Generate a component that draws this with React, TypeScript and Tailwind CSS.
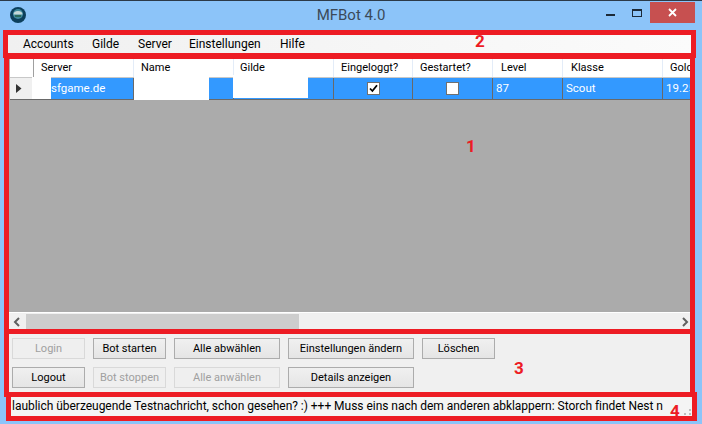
import React from 'react';

const columns = [
  { title: 'Server', width: 'w-[100px]', pad: 'pl-[7px]' },
  { title: 'Name', width: 'w-[100px]', pad: 'pl-[7px]' },
  { title: 'Gilde', width: 'w-[100px]', pad: 'pl-[6px]' },
  { title: 'Eingeloggt?', width: 'w-[79px]', pad: 'pl-[7px]' },
  { title: 'Gestartet?', width: 'w-[80px]', pad: 'pl-[7px]' },
  { title: 'Level', width: 'w-[70px]', pad: 'pl-[8px]' },
  { title: 'Klasse', width: 'w-[100px]', pad: 'pl-[8px]' },
  { title: 'Gold', width: 'w-[60px]', pad: 'pl-[7px]' },
];

const menuItems = [
  { label: 'Accounts', width: 'w-[69px]' },
  { label: 'Gilde', width: 'w-[46px]' },
  { label: 'Server', width: 'w-[51px]' },
  { label: 'Einstellungen', width: 'w-[91px]' },
  { label: 'Hilfe', width: 'w-[40px]' },
];

function Btn({ label, width, disabled }: { label: string; width: string; disabled?: boolean }) {
  return (
    <div
      className={`${width} h-[21px] pt-[1px] flex items-center justify-center border text-[11px] ${
        disabled
          ? 'border-[#d9d9d9] bg-[#efefef] text-[#a0a0a0]'
          : 'border-[#acacac] bg-gradient-to-b from-[#f0f0f0] to-[#e5e5e5] text-black'
      }`}
    >
      {label}
    </div>
  );
}

function Check({ checked }: { checked?: boolean }) {
  return (
    <div className="w-[13px] h-[13px] bg-white border border-[#707070] flex items-center justify-center">
      {checked && (
        <svg width="9" height="9" viewBox="0 0 9 9">
          <path d="M1 4.5 L3.4 7 L8 1.2" fill="none" stroke="#000" strokeWidth="1.8" />
        </svg>
      )}
    </div>
  );
}

function Annotation({ className }: { className: string }) {
  return <div className={`absolute border-[5px] border-[#ed1c24] pointer-events-none ${className}`} />;
}

function Num({ className, children }: { className: string; children: React.ReactNode }) {
  return <div className={`absolute text-[17px] font-bold leading-none text-[#ed1c24] ${className}`}>{children}</div>;
}

export default function App() {
  return (
    <div
      className="relative w-[702px] h-[424px] overflow-hidden bg-[#8cc4f9] flex flex-col border-t border-[#2c3a48]"
      style={{ fontFamily: 'Roboto, "Noto Sans", sans-serif' }}
    >
      {/* title bar */}
      <div className="relative h-[29px] shrink-0 flex items-center justify-center">
        <svg className="absolute left-[10px] top-[6px]" width="16" height="16" viewBox="0 0 16 16">
          <circle cx="8" cy="8" r="8" fill="#0c3f5c" />
          <circle cx="8" cy="7" r="5" fill="#3f8a9e" />
          <path d="M3.5 7.5 A4.5 3.5 0 0 1 12.5 7.5 Z" fill="#c5d8d8" />
          <path d="M5 8 h6 v2 h-6 Z" fill="#2a6a5c" />
        </svg>
        <span className="text-[15px] text-[#3b4a5a]">MFBot 4.0</span>
        <div className="absolute left-[606px] top-[13px] w-[9px] h-[2px] bg-[#1c2a38]" />
        <div className="absolute left-[632px] top-[8px] w-[10px] h-[8px] border border-t-2 border-[#1c2a38]" />
        <div className="absolute left-[650px] top-[1px] w-[45px] h-[21px] bg-[#c75050] flex items-center justify-center">
          <svg width="9" height="9" viewBox="0 0 9 9">
            <path d="M1 1 L8 8 M8 1 L1 8" stroke="#fff" strokeWidth="1.8" />
          </svg>
        </div>
      </div>

      {/* content */}
      <div className="ml-[8px] w-[683px] flex flex-col">
        <div className="h-[28px] flex items-center pl-[15px] bg-gradient-to-r from-[#f0f0f0] to-[#fbfbfb]">
          {menuItems.map((m) => (
            <div key={m.label} className={`${m.width} text-[12px] text-black`}>
              {m.label}
            </div>
          ))}
        </div>

        {/* grid */}
        <div className="flex flex-col bg-[#ababab] h-[254px] overflow-hidden pl-[2px]">
          <div className="h-[20px] flex bg-white border-b border-[#c8c8c8] shrink-0">
            <div className="w-[24px] shrink-0 border-r border-[#a0a0a0]" />
            {columns.map((c) => (
              <div
                key={c.title}
                className={`${c.width} ${c.pad} pt-[2px] shrink-0 border-r border-[#e3ecf8] text-[11px] text-black flex items-center`}
              >
                {c.title}
              </div>
            ))}
          </div>
          <div className="h-[22px] flex shrink-0 bg-[#3399ff] border-b border-[#696969] text-[11.5px] text-white">
            <div className="w-[24px] shrink-0 bg-[#f0f0f0] border-r border-[#a0a0a0] flex items-center pl-[6px]">
              <svg width="6" height="9" viewBox="0 0 6 9">
                <path d="M0 0 L5.5 4.5 L0 9 Z" fill="#333" />
              </svg>
            </div>
            <div className="w-[100px] shrink-0 border-r border-[#696969] pl-[17px] pt-[1px] flex items-center">sfgame.de</div>
            <div className="w-[100px] shrink-0 border-r border-[#696969]" />
            <div className="w-[100px] shrink-0 border-r border-[#696969]" />
            <div className="w-[79px] shrink-0 border-r border-[#696969] flex items-center justify-center">
              <Check checked />
            </div>
            <div className="w-[80px] shrink-0 border-r border-[#696969] flex items-center justify-center">
              <Check />
            </div>
            <div className="w-[70px] shrink-0 border-r border-[#696969] pl-[3px] pt-[1px] flex items-center">87</div>
            <div className="w-[100px] shrink-0 border-r border-[#696969] pl-[3px] pt-[1px] flex items-center">Scout</div>
            <div className="w-[60px] shrink-0 pl-[3px] pt-[1px] flex items-center">19.25</div>
          </div>
        </div>

        {/* scrollbar */}
        <div className="h-[18px] flex items-center bg-[#f0f0f0] border-t border-white pl-[5px] pr-[2px]">
          <svg width="8" height="10" viewBox="0 0 8 10">
            <path d="M6 1 L2 5 L6 9" fill="none" stroke="#606060" strokeWidth="2" />
          </svg>
          <div className="ml-[5px] w-[273px] h-[15px] bg-[#cdcdcd]" />
          <div className="flex-1" />
          <svg width="8" height="10" viewBox="0 0 8 10">
            <path d="M2 1 L6 5 L2 9" fill="none" stroke="#606060" strokeWidth="2" />
          </svg>
        </div>

        {/* buttons */}
        <div className="h-[66px] bg-[#f0f0f0] flex flex-col gap-[8px] pt-[8px] pl-[4px]">
          <div className="flex gap-[8px]">
            <Btn label="Login" width="w-[73px]" disabled />
            <Btn label="Bot starten" width="w-[73px]" />
            <Btn label="Alle abwählen" width="w-[106px]" />
            <Btn label="Einstellungen ändern" width="w-[126px]" />
            <Btn label="Löschen" width="w-[73px]" />
          </div>
          <div className="flex gap-[8px]">
            <Btn label="Logout" width="w-[73px]" />
            <Btn label="Bot stoppen" width="w-[73px]" disabled />
            <Btn label="Alle anwählen" width="w-[106px]" disabled />
            <Btn label="Details anzeigen" width="w-[126px]" />
          </div>
        </div>
      </div>

      {/* status strip */}
      <div className="relative ml-[11px] w-[681px] h-[20px] bg-[#f4f4f4] flex items-center pl-[1px] overflow-hidden">
        <span className="text-[12px] tracking-[-0.03px] text-black whitespace-nowrap">
          laublich überzeugende Testnachricht, schon gesehen? :) +++ Muss eins nach dem anderen abklappern: Storch findet Nest n
        </span>
        <div className="absolute right-[1px] bottom-[1px] w-[11px] h-[9px] grid grid-cols-3 gap-[2px] content-end justify-end">
          <span />
          <span />
          <span className="w-[2px] h-[2px] bg-[#bdbdbd]" />
          <span />
          <span className="w-[2px] h-[2px] bg-[#bdbdbd]" />
          <span className="w-[2px] h-[2px] bg-[#bdbdbd]" />
        </div>
      </div>

      {/* redaction patches */}
      <div className="absolute left-[32px] top-[76px] w-[19px] h-[22px] bg-white" />
      <div className="absolute left-[134px] top-[74px] w-[75px] h-[25px] bg-white" />
      <div className="absolute left-[233px] top-[74px] w-[75px] h-[23px] bg-white" />

      {/* red annotations */}
      <Annotation className="left-[4px] top-[53px] w-[691px] h-[280px]" />
      <Annotation className="left-[4px] top-[328px] w-[691px] h-[68px]" />
      <Annotation className="left-[6px] top-[391px] w-[691px] h-[29px]" />
      <Annotation className="left-[3px] top-[29px] w-[693px] h-[28px]" />
      <Num className="left-[475px] top-[32px]">2</Num>
      <Num className="left-[466px] top-[137px]">1</Num>
      <Num className="left-[514px] top-[359px]">3</Num>
      <Num className="left-[670px] top-[402px]">4</Num>
    </div>
  );
}
